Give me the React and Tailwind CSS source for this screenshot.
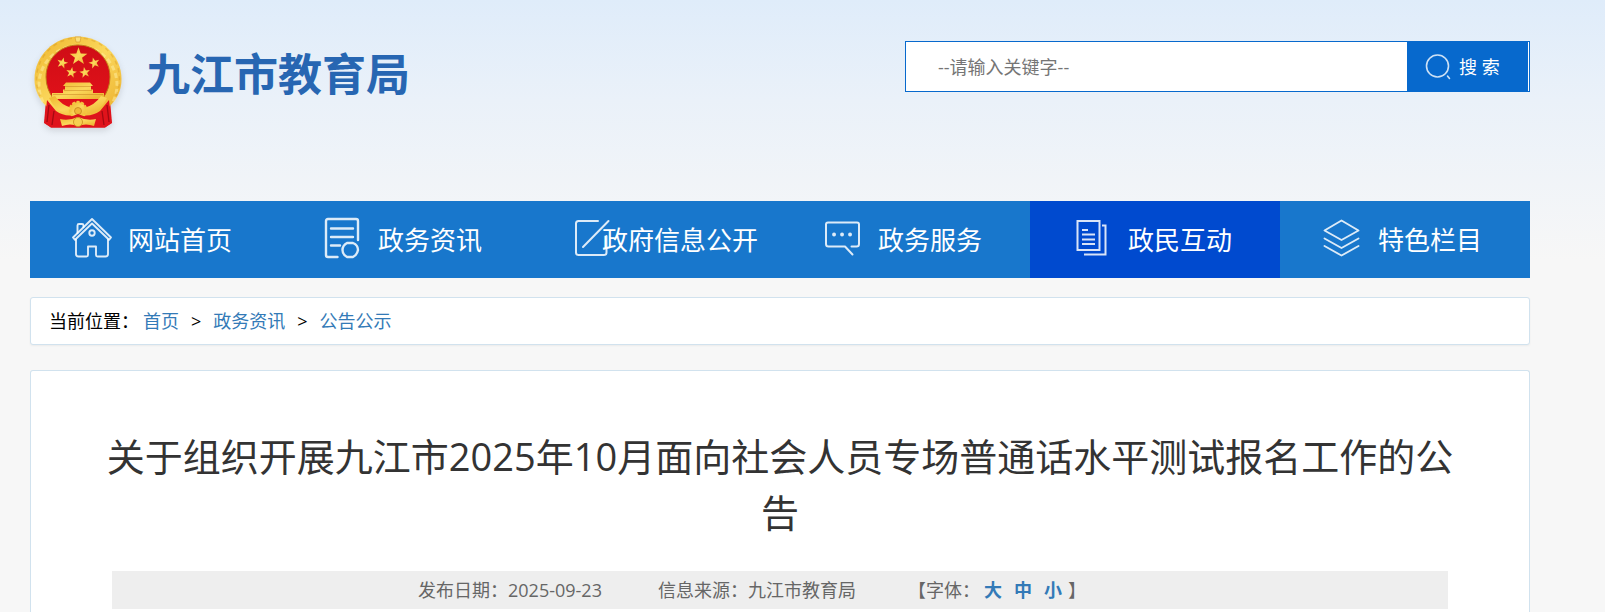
const navItems = [
  { label: "网站首页", icon: HomeIcon },
  { label: "政务资讯", icon: NewsIcon },
  { label: "政府信息公开", icon: EditIcon, overlap: true },
  { label: "政务服务", icon: ChatIcon },
  { label: "政民互动", icon: DocsIcon, active: true },
  { label: "特色栏目", icon: LayersIcon },
];

function Icon({ children, width = 2 }) {
  return (
    <svg viewBox="0 0 44 44" className="size-11 shrink-0" fill="none" stroke="#fff" strokeOpacity="0.85" strokeWidth={width} strokeLinecap="round" strokeLinejoin="round" aria-hidden="true">
      {children}
    </svg>
  );
}

function HomeIcon() {
  return (
    <Icon width={1.9}>
      <path d="M3 21.5 L22 3 L41 21.5 L39 23.8 L22 7.5 L5 23.8 Z" />
      <path d="M6 23.5 V38 Q6 40.5 8.5 40.5 H16.5 Q18 40.5 18 39 V30.5 H26 V39 Q26 40.5 27.5 40.5 H35.5 Q38 40.5 38 38 V23.5" />
      <path d="M7.5 17 V9.5 Q7.500 8 9 8 H12 Q13.5 8 13.5 9.5 V11" />
      <circle cx="22" cy="17" r="2.7" />
    </Icon>
  );
}

function NewsIcon() {
  return (
    <Icon width={2.4}>
      <path d="M17.5 41 H8 Q6 41 6 39 V5 Q6 3 8 3 H36 Q38 3 38 5 V24" />
      <path d="M11 12.5 H33 M11 21 H33 M11 29.5 H20" />
      <path d="M27 27 H33 Q38 29 38 34 Q37 39 33 41 H27 Q22.500 38.500 22.5 34 Q22.500 29.500 27 27 Z" />
    </Icon>
  );
}

function EditIcon() {
  return (
    <Icon width={2}>
      <path d="M28 5 H8.5 Q6 5 6 7.5 V36.5 Q6 39 8.5 39 H34 Q36.5 39 36.5 36.5 V20" />
      <path d="M38.5 5 L13 31" />
    </Icon>
  );
}

function ChatIcon() {
  return (
    <Icon width={2}>
      <path d="M31.500 30.5 H36.5 Q39 30.5 39 28 V8.500 Q39 6.500 37 6.500 H8 Q6 6.500 6 8.500 V28 Q6 30.5 8.500 30.5 H25 L32.500 38.5" />
      <path d="M14 18.5 H14.1 M22 18.5 H22.1 M30 18.5 H30.1" strokeWidth="3.8" />
    </Icon>
  );
}

function DocsIcon() {
  return (
    <Icon width={2}>
      <g strokeLinecap="square" strokeLinejoin="miter">
        <path d="M7.5 5 H29.5 V34 H7.5 Z" />
        <path d="M33 9.5 H35.5 V38.5 H15" />
        <path d="M13 14 H17 M13 18.5 H24 M13 23.5 H24 M13 28 H24" />
      </g>
    </Icon>
  );
}

function LayersIcon() {
  return (
    <Icon width={1.9}>
      <path d="M21.500 4.500 L38.500 14.500 L21.500 24 L4.500 14.500 Z" />
      <path d="M4.500 22.500 L21.500 32 L38.500 22.500" />
      <path d="M4.500 30 L21.500 39.500 L38.500 30" />
    </Icon>
  );
}

function Star({ x, y, r, turn = 0 }) {
  return (
    <path
      transform={`translate(${x} ${y}) rotate(${turn}) scale(${r})`}
      d="M0 -1 L.235 -.324 L.951 -.309 L.380 .124 L.588 .809 L0 .4 L-.588 .809 L-.380 .124 L-.951 -.309 L-.235 -.324 Z"
      fill="url(#gold)"
    />
  );
}

function Emblem() {
  return (
    <svg viewBox="0 0 88 94" className="h-[94px] w-[88px] shrink-0 drop-shadow-md" role="img" aria-label="国徽">
      <defs>
        <linearGradient id="gold" x1="0" y1="0" x2="1" y2="1">
          <stop offset="0" stopColor="#eeb52e" />
          <stop offset="0.5" stopColor="#fbd85c" />
          <stop offset="1" stopColor="#ebae2b" />
        </linearGradient>
        <linearGradient id="red" x1="0" y1="0" x2="0" y2="1">
          <stop offset="0" stopColor="#cf0d16" />
          <stop offset="1" stopColor="#e3121a" />
        </linearGradient>
      </defs>
      <path d="M12 64 L10 87 L17 91.5 H71 L78 87 L76 64 Z" fill="#e0131b" />
      <path d="M44 0.500 C68 0.500 87.500 20 87.500 43 C87.500 60 77 73 60 80 H28 C11 73 0.500 60 0.500 43 C0.500 20 20 0.500 44 0.500 Z" fill="url(#gold)" />
      <path d="M9 66 A39 39 0 1 1 79 66" fill="none" stroke="#fff0a2" strokeOpacity="0.5" strokeWidth="3" strokeDasharray="5 3" />
      <path d="M6 60 A41.500 41.500 0 1 1 82 60" fill="none" stroke="#c98418" strokeOpacity="0.3" strokeWidth="1.500" strokeDasharray="4 4" />
      <path d="M41 1 H47 L46 6 H42 Z" fill="#fbe07a" stroke="#d5952a" strokeWidth="0.6" />
      <path d="M44 9 C62 9 76 23 76 41 C76 57 65 70 54 73 H34 C23 70 12 57 12 41 C12 23 26 9 44 9 Z" fill="url(#red)" stroke="#c27a17" strokeWidth="1" />
      <Star x={44.5} y={20.5} r={9.3} />
      <Star x={28.3} y={27} r={5.8} turn={15} />
      <Star x={60.3} y={27} r={5.8} turn={-15} />
      <Star x={37.3} y={36.6} r={5.6} turn={10} />
      <Star x={50.9} y={36.6} r={5.6} turn={-10} />
      <path d="M32 46.500 H56 L59 50 H29 Z M31 50 H57 V54 H31 Z M29 53.500 H59 V57 H70 V63 H18 V57 H29 Z" fill="url(#gold)" />
      <path d="M31 50.500 H57 M30 54.500 H58 M19 58.500 H69" stroke="#b96f13" strokeOpacity="0.5" strokeWidth="0.8" />
      <path d="M13 64 L22 75 Q32 82 44 78 Q56 82 66 75 L75 64 L77.500 87 L71 91.500 H17 L10.500 87 Z" fill="#e0131b" />
      <path d="M15 69 L13 86 M20 75 L18 89 M73 69 L75 86 M68 75 L70 89" stroke="#a30a11" strokeWidth="1.300" />
      <path d="M15 62 Q21 75 34 78 L38 72 Q27 69 21 60 Z M73 62 Q67 75 54 78 L50 72 Q61 69 67 60 Z" fill="url(#gold)" />
      <circle cx="44" cy="74" r="8" fill="url(#gold)" stroke="#f4c63f" strokeWidth="2.500" strokeDasharray="3 1.500" />
      <circle cx="44" cy="75" r="3.500" fill="#f0b838" stroke="#c07c18" strokeWidth="0.7" />
      <path d="M21 77 Q32 84 44 78 Q56 84 67 77 L66 82 Q55 86 44 82 Q33 86 22 82 Z" fill="#dc151c" />
      <path d="M26 83 Q35 85 44 81 Q53 85 62 83 L60 90 Q52 87 44 90 Q36 87 28 90 Z" fill="url(#gold)" />
      <circle cx="44" cy="86" r="4.500" fill="#f6cf50" stroke="#c98a1e" strokeWidth="0.8" />
    </svg>
  );
}

export default function App() {
  return (
    <div className="min-h-screen bg-[#f7f7f7] bg-[linear-gradient(to_bottom,#dfecfa_0px,#eaf1f9_100px,#f7f7f7_260px)] bg-no-repeat pr-[75px] pl-[30px] font-['Open_Sans','Noto_Sans_CJK_SC',sans-serif] text-lg text-black">
      <header className="flex h-[201px] items-start justify-between">
        <a href="#" className="flex items-start gap-6 pt-9 pl-1">
          <Emblem />
          <span className="mt-2 text-[44px] leading-[60px] font-bold text-[#2766b2]">九江市教育局</span>
        </a>
        <form className="mt-[41px] flex h-[51px] w-[625px] border border-[#0769cd] bg-white pr-px" onSubmit={(e) => e.preventDefault()}>
          <input type="text" aria-label="关键字" placeholder="--请输入关键字--" className="min-w-0 flex-1 px-8 outline-none placeholder:text-[#757575]" />
          <button type="submit" className="flex w-[121px] items-center gap-2 bg-[#0769cd] pl-[18px] text-white">
            <svg viewBox="0 0 26 26" className="size-[26px]" fill="none" stroke="#fff" strokeOpacity="0.8" strokeWidth="1.6" strokeLinecap="round" aria-hidden="true">
              <circle cx="12.5" cy="12" r="11" />
              <path d="M22.500 22 L24.500 24.500" />
            </svg>
            搜 索
          </button>
        </form>
      </header>

      <nav className="flex h-[77px] bg-[#1877cc] text-[26px] text-white">
        {navItems.map(({ label, icon: Glyph, active, overlap }) => (
          <a key={label} href="#" className={`flex flex-1 items-center pl-10 whitespace-nowrap ${active ? "bg-[#004acf]" : ""}`}>
            <span className="-mt-1 flex">
              <Glyph />
            </span>
            <span className={overlap ? "-ml-3 pt-0.5" : "ml-[14px] pt-0.5"}>{label}</span>
          </a>
        ))}
      </nav>

      <div className="mt-[19px] flex h-12 items-center rounded-[3px] border border-[#d1e2ee] bg-white pl-[18px] shadow-xs">
        <span className="mr-1">当前位置：</span>
        <a href="#" className="text-[#337ab7]">首页</a>
        <span className="px-3">&gt;</span>
        <a href="#" className="text-[#337ab7]">政务资讯</a>
        <span className="px-3">&gt;</span>
        <a href="#" className="text-[#337ab7]">公告公示</a>
      </div>

      <main className="mt-[25px] min-h-[242px] rounded-t-[3px] border border-b-0 border-[#d1e2ee] bg-white px-[70px] pt-[57px]">
        <h1 className="text-center text-[38px] leading-[56px] text-[#333]">关于组织开展九江市2025年10月面向社会人员专场普通话水平测试报名工作的公告</h1>
        <div className="mx-[11px] mt-[31px] flex h-[38px] items-center justify-center bg-[#eee] pr-14 text-[#666]">
          <span>发布日期：2025-09-23</span>
          <span className="ml-14">信息来源：九江市教育局</span>
          <span className="ml-[52px] flex items-center">
            【字体：
            <button type="button" className="ml-1 font-bold text-[#337ab7]">大</button>
            <button type="button" className="mx-3 font-bold text-[#337ab7]">中</button>
            <button type="button" className="font-bold text-[#337ab7]">小</button>
            <span className="ml-1.5">】</span>
          </span>
        </div>
      </main>
    </div>
  );
}
